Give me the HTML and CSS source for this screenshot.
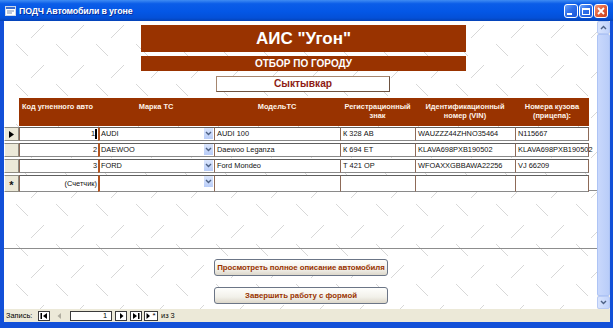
FILE: index.html
```html
<!doctype html>
<html lang="ru">
  <head>
    <meta charset="utf-8">
    <title>ПОДЧ Автомобили в угоне</title>
    <link rel="stylesheet" href="styles.css">
  </head>
  <body>
    <div class="window">
      <div class="titlebar">
        <svg class="app-icon" width="11" height="10" viewBox="0 0 11 10">
          <rect x="0.5" y="0.5" width="10" height="9" fill="#fff" stroke="#cfd8e8"/>
          <rect x="1" y="1" width="9" height="2" fill="#3a6fd0"/>
          <rect x="2" y="4.5" width="7" height="1" fill="#7d8fb3"/>
          <rect x="2" y="6.5" width="5" height="1" fill="#7d8fb3"/>
        </svg>
        <span class="title">ПОДЧ Автомобили в угоне</span>
        <div class="caption-buttons">
          <span class="cap-btn"><span class="min-bar"></span></span>
          <span class="cap-btn"><span class="max-box"></span></span>
          <span class="cap-btn close">
            <svg width="8" height="8" viewBox="0 0 8 8"><path d="M1 1 L7 7 M7 1 L1 7" stroke="#fff" stroke-width="1.8"/></svg>
          </span>
        </div>
      </div>

      <div class="client">
        <div class="form">
          <div class="form-header">
            <div class="banner">АИС "Угон"</div>
            <div class="subbanner">ОТБОР ПО ГОРОДУ</div>
            <div class="city">Сыктывкар</div>
          </div>

          <div class="sheet">
            <div class="sheet-row sheet-head">
              <div class="corner"></div>
              <div class="th left">Код угненного авто</div>
              <div class="th">Марка ТС</div>
              <div class="th">МодельТС</div>
              <div class="th">Регистрационный<br>знак</div>
              <div class="th">Идентификационный<br>номер (VIN)</div>
              <div class="th">Номера кузова<br>(прицепа):</div>
            </div>

            <div class="sheet-row">
              <div class="selector">
                <svg width="5" height="7" viewBox="0 0 5 7"><path d="M0 0 L5 3.5 L0 7Z"/></svg>
              </div>
              <div class="cell num">1<span class="caret"></span></div>
              <div class="cell combo"><span>AUDI</span><span class="drop"><svg width="7" height="5" viewBox="0 0 7 5"><path d="M1 1 L3.5 3.5 L6 1" stroke="#4d6185" stroke-width="1.4" fill="none"/></svg></span></div>
              <div class="cell">AUDI 100</div>
              <div class="cell">К 328 АВ</div>
              <div class="cell">WAUZZZ44ZHNO35464</div>
              <div class="cell">N115667</div>
            </div>

            <div class="sheet-row">
              <div class="selector"></div>
              <div class="cell num">2</div>
              <div class="cell combo"><span>DAEWOO</span><span class="drop"><svg width="7" height="5" viewBox="0 0 7 5"><path d="M1 1 L3.5 3.5 L6 1" stroke="#4d6185" stroke-width="1.4" fill="none"/></svg></span></div>
              <div class="cell">Daewoo Leganza</div>
              <div class="cell">К 694 ЕТ</div>
              <div class="cell">KLAVA698PXB190502</div>
              <div class="cell">KLAVA698PXB190502</div>
            </div>

            <div class="sheet-row">
              <div class="selector"></div>
              <div class="cell num">3</div>
              <div class="cell combo"><span>FORD</span><span class="drop"><svg width="7" height="5" viewBox="0 0 7 5"><path d="M1 1 L3.5 3.5 L6 1" stroke="#4d6185" stroke-width="1.4" fill="none"/></svg></span></div>
              <div class="cell">Ford Mondeo</div>
              <div class="cell">Т 421 ОР</div>
              <div class="cell">WFOAXXGBBAWA22256</div>
              <div class="cell">VJ 66209</div>
            </div>

            <div class="sheet-row">
              <div class="selector new">*</div>
              <div class="cell num">(Счетчик)</div>
              <div class="cell combo"><span></span><span class="drop"><svg width="7" height="5" viewBox="0 0 7 5"><path d="M1 1 L3.5 3.5 L6 1" stroke="#4d6185" stroke-width="1.4" fill="none"/></svg></span></div>
              <div class="cell"></div>
              <div class="cell"></div>
              <div class="cell"></div>
              <div class="cell"></div>
            </div>
          </div>

          <div class="detail-space"></div>

          <div class="form-footer">
            <div class="cmd wide">Просмотреть полное описание автомобиля</div>
            <div class="cmd">Завершить работу с формой</div>
          </div>
        </div>

        <div class="vscroll">
          <div class="sb-arrow">
            <svg width="7" height="5" viewBox="0 0 7 5"><path d="M1 4 L3.5 1.5 L6 4" stroke="#4d6185" stroke-width="1.4" fill="none"/></svg>
          </div>
          <div class="sb-thumb"></div>
          <div class="sb-arrow">
            <svg width="7" height="5" viewBox="0 0 7 5"><path d="M1 1 L3.5 3.5 L6 1" stroke="#4d6185" stroke-width="1.4" fill="none"/></svg>
          </div>
        </div>
      </div>

      <div class="navbar">
        <span class="nav-label">Запись:</span>
        <span class="nav-btn first">
          <svg width="8" height="6" viewBox="0 0 8 6"><rect x="0.5" y="0" width="1.5" height="6"/><path d="M7 0 L3 3 L7 6Z"/></svg>
        </span>
        <span class="nav-btn off">
          <svg width="5" height="6" viewBox="0 0 5 6"><path d="M4 0 L0.5 3 L4 6Z" fill="#b0ada0"/></svg>
        </span>
        <span class="nav-input">1</span>
        <span class="nav-btn">
          <svg width="5" height="6" viewBox="0 0 5 6"><path d="M1 0 L4.5 3 L1 6Z"/></svg>
        </span>
        <span class="nav-btn last">
          <svg width="8" height="6" viewBox="0 0 8 6"><path d="M1 0 L5 3 L1 6Z"/><rect x="6" y="0" width="1.5" height="6"/></svg>
        </span>
        <span class="nav-btn add">
          <svg width="5" height="6" viewBox="0 0 5 6"><path d="M0.5 0 L4 3 L0.5 6Z"/></svg><span class="star">*</span>
        </span>
        <span class="nav-count">из 3</span>
      </div>
    </div>
  </body>
</html>
```

FILE: styles.css
```css
* {
  box-sizing: border-box;
}

body {
  margin: 0;
  font-family: "Liberation Sans", Arial, sans-serif;
}

.window {
  width: 613px;
  height: 328px;
  display: flex;
  flex-direction: column;
  background: #1250d8;
  padding-bottom: 6px;
}

/* title bar */

.titlebar {
  height: 21px;
  display: flex;
  align-items: center;
  padding: 0 5px 0 5px;
  background: linear-gradient(to bottom, #3f8cf3 0%, #0b5de8 18%, #0457e6 55%, #0450d8 85%, #0542b6 100%);
}

.app-icon {
  flex: none;
  margin-top: 1px;
}

.title {
  margin-left: 3px;
  color: #fff;
  font-size: 8.8px;
  font-weight: bold;
  letter-spacing: -0.15px;
  text-shadow: 1px 1px 0 #0a2f9a;
}

.caption-buttons {
  margin-left: auto;
  display: flex;
  gap: 1px;
  padding-top: 1px;
}

.cap-btn {
  width: 14px;
  height: 14px;
  border: 1px solid #fff;
  border-radius: 3px;
  background: linear-gradient(135deg, #6aa2fb 0%, #2f6fe9 45%, #1b56d8 100%);
  display: flex;
  align-items: center;
  justify-content: center;
}

.cap-btn.close {
  background: linear-gradient(135deg, #f29a7c 0%, #e2613d 45%, #c7401e 100%);
}

.min-bar {
  width: 5px;
  height: 2px;
  background: #fff;
  margin: 6px 3px 0 0;
}

.max-box {
  width: 8px;
  height: 7px;
  border: 1px solid #fff;
  border-top-width: 2px;
}

/* client area */

.client {
  height: 288px;
  display: flex;
  margin: 0 3px 0 4px;
}

.form {
  flex: 1;
  display: flex;
  flex-direction: column;
  background-color: #fff;
  background-image: url("data:image/svg+xml,%3Csvg xmlns='http://www.w3.org/2000/svg' width='40' height='40'%3E%3Cpath d='M12 23 L24 35 M27 17 L40 4' stroke='%23d8d8d8' stroke-width='1' fill='none'/%3E%3C/svg%3E");
}

.form-header {
  display: flex;
  flex-direction: column;
  padding-top: 4px;
}

.banner {
  margin-left: 137px;
  width: 325px;
  height: 27px;
  background: #993300;
  color: #fff;
  font-size: 17px;
  font-weight: bold;
  text-align: center;
  line-height: 27px;
}

.subbanner {
  margin: 4px 0 0 137px;
  width: 325px;
  height: 15px;
  background: #993300;
  color: #fff;
  font-size: 10px;
  font-weight: bold;
  text-align: center;
  line-height: 15px;
}

.city {
  margin: 5px 0 0 212px;
  width: 174px;
  height: 16px;
  background: #fff;
  border: 1px solid #a5866f;
  border-right-color: #6d5240;
  border-bottom-color: #6d5240;
  color: #8e1b14;
  font-size: 10.2px;
  font-weight: bold;
  text-align: center;
  line-height: 14px;
}

/* datasheet */

.sheet {
  margin-top: 6px;
  border-bottom: 1px solid #8d8d8d;
  padding-bottom: 1px;
}

.sheet-row {
  display: grid;
  grid-template-columns: 15px 79px 116px 126px 75px 100px 74px;
  height: 14px;
  margin-bottom: 2px;
  font-size: 7.4px;
  color: #111;
}

.sheet-row:last-child {
  margin-bottom: 0;
}

.sheet-head {
  height: 28px;
  margin-bottom: 1px;
}

.th {
  background: #993300;
  color: #fff4ea;
  font-weight: bold;
  font-size: 7.4px;
  line-height: 9px;
  padding-top: 4px;
  text-align: center;
  white-space: nowrap;
}

.th.left {
  text-align: left;
  padding-left: 3px;
}

.selector {
  background: #ece9d8;
  border: 1px solid #8e8c82;
  border-left-color: #fff;
  display: flex;
  align-items: center;
  justify-content: center;
}

.selector.new {
  font-size: 11px;
  font-weight: bold;
  line-height: 12px;
  padding-top: 3px;
}

.cell {
  background: #fff;
  border-top: 1px solid #5f5f5f;
  border-bottom: 1px solid #8a8a8a;
  border-left: 1px solid #8d6a58;
  line-height: 12px;
  padding: 0 2px;
  white-space: nowrap;
}

.cell:last-child {
  border-right: 1px solid #8d6a58;
}

.cell.num {
  display: flex;
  justify-content: flex-end;
  align-items: center;
  padding-right: 1px;
}

.caret {
  width: 2px;
  height: 10px;
  background: #000;
}

.cell.combo {
  display: flex;
  justify-content: space-between;
  border-left: 2px solid #b4541f;
  padding-left: 1px;
  padding-right: 1px;
}

.drop {
  width: 9px;
  height: 11px;
  background: linear-gradient(#dbe6fd, #b9cdf8);
  display: flex;
  align-items: center;
  justify-content: center;
}

.detail-space {
  height: 58px;
  border-bottom: 1px solid #8d8d8d;
}

/* footer with command buttons */

.form-footer {
  display: flex;
  flex-direction: column;
  padding: 10px 0 0 210px;
  gap: 11px;
}

.cmd {
  width: 174px;
  height: 17px;
  border: 1px solid #6b7586;
  border-radius: 3px;
  background: linear-gradient(#fefefc 0%, #f2f1ea 60%, #dcd7ca 100%);
  color: #993300;
  font-size: 7.8px;
  font-weight: bold;
  text-align: center;
  line-height: 15px;
  white-space: nowrap;
}

.cmd.wide {
  letter-spacing: -0.05px;
}

/* scroll bar */

.vscroll {
  width: 13px;
  display: flex;
  flex-direction: column;
  background: #f3f1ec;
}

.sb-arrow {
  height: 13px;
  border: 1px solid #b7caf5;
  border-radius: 2px;
  background: linear-gradient(90deg, #d9e4fd, #c1d3fb);
  display: flex;
  align-items: center;
  justify-content: center;
}

.sb-thumb {
  flex: 1;
  background: linear-gradient(90deg, #c9d8fc, #b9cdf9);
  border: 1px solid #aec4f5;
  border-radius: 2px;
}

/* record navigation */

.navbar {
  height: 13px;
  margin: 0 3px 0 4px;
  background: #ece9d8;
  display: flex;
  align-items: center;
  font-size: 7.4px;
  color: #000;
  padding-left: 2px;
}

.nav-label {
  width: 32px;
}

.nav-btn {
  width: 12px;
  height: 10px;
  border: 1px solid #3a3a3a;
  background: #fff;
  display: flex;
  align-items: center;
  justify-content: center;
  margin-right: 3px;
}

.nav-btn.off {
  border-color: transparent;
  background: transparent;
  margin-right: 5px;
}

.nav-btn.last {
  margin-right: 2px;
}

.nav-btn.add {
  width: 14px;
  margin-right: 3px;
}

.star {
  font-size: 8px;
  line-height: 8px;
  margin-left: 1px;
}

.nav-input {
  width: 42px;
  height: 10px;
  border: 1px solid #3a3a3a;
  background: #fff;
  text-align: right;
  line-height: 8px;
  padding-right: 4px;
  margin-right: 3px;
}
```
